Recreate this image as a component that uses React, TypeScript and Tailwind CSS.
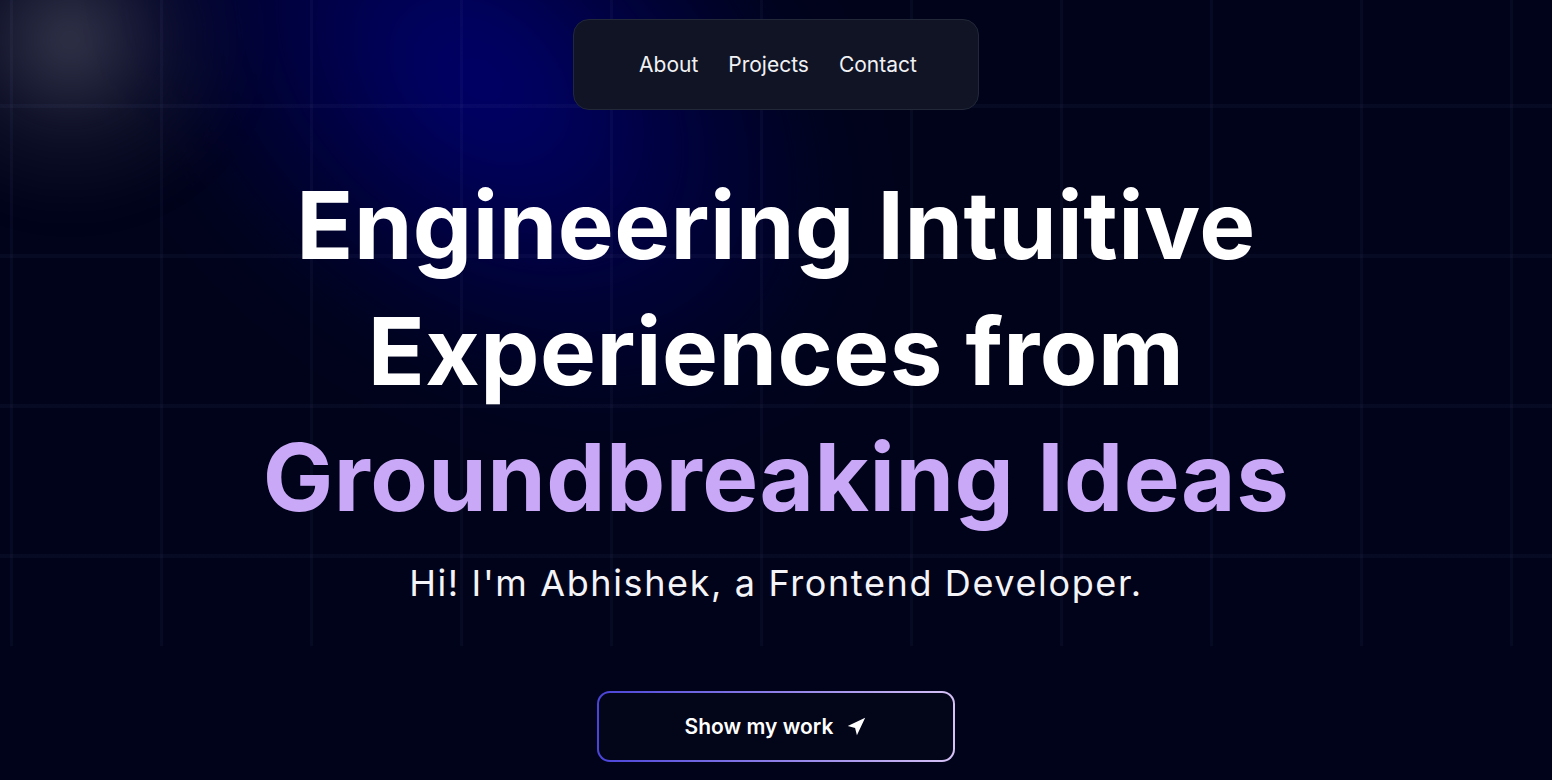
import React from 'react';

const navLinks = ['About', 'Projects', 'Contact'];

const Grid: React.FC = () => (
  <div className="pointer-events-none absolute left-0 top-0 h-[646px] w-full bg-[linear-gradient(to_right,rgba(130,140,200,0.05)_3px,transparent_3px),linear-gradient(to_bottom,rgba(130,140,200,0.05)_4px,transparent_4px)] bg-[size:150px_150px] bg-[position:10px_104px]" />
);

const Glows: React.FC = () => (
  <>
    <div className="pointer-events-none absolute -left-[120px] -top-[140px] h-[360px] w-[380px] rounded-full bg-[radial-gradient(closest-side,rgba(70,72,94,0.7),rgba(40,42,66,0.3)_55%,transparent)] blur-[14px]" />
    <div className="pointer-events-none absolute left-[60px] -top-[200px] h-[560px] w-[840px] rotate-[40deg] rounded-full bg-[radial-gradient(closest-side,rgba(0,0,112,1),rgba(0,0,90,0.55)_55%,transparent)] blur-[40px]" />
  </>
);

export default function App() {
  return (
    <div className="relative h-[780px] w-full overflow-hidden bg-[#00031a] font-['Inter',sans-serif] text-white">
      <Glows />
      <Grid />

      <div className="relative flex flex-col items-center">
        <nav className="mt-[19px] flex h-[91px] w-[406px] items-center justify-center gap-[30px] rounded-2xl border border-[#222838] bg-[#101425] pl-[4px] text-[21px] text-[#f1f1f4]">
          {navLinks.map(link => (
            <a key={link} href="#" className="hover:text-white">
              {link}
            </a>
          ))}
        </nav>

        <h1 className="mt-[52px] text-center text-[94px] font-bold leading-[126px] tracking-[0.005em]">
          Engineering Intuitive
          <br />
          Experiences from
          <br />
          <span className="text-[#c9a9f7]">Groundbreaking Ideas</span>
        </h1>

        <p className="mt-[16px] text-[36px] tracking-[0.045em] text-[#f4f4f8]">
          Hi! I'm Abhishek, a Frontend Developer.
        </p>

        <div className="mt-[81px] rounded-[13px] bg-[linear-gradient(to_right,#4a44d8,#8d7ee8,#d7c2f6)] p-[2px]">
          <button className="flex h-[67px] w-[354px] items-center justify-center gap-[12px] rounded-[11px] bg-[#030519] text-[21px] font-semibold text-white">
            Show my work
            <svg width="22" height="22" viewBox="0 0 24 24" fill="currentColor">
              <polygon points="3 11 22 2 13 21 11 13 3 11" />
            </svg>
          </button>
        </div>
      </div>
    </div>
  );
}
